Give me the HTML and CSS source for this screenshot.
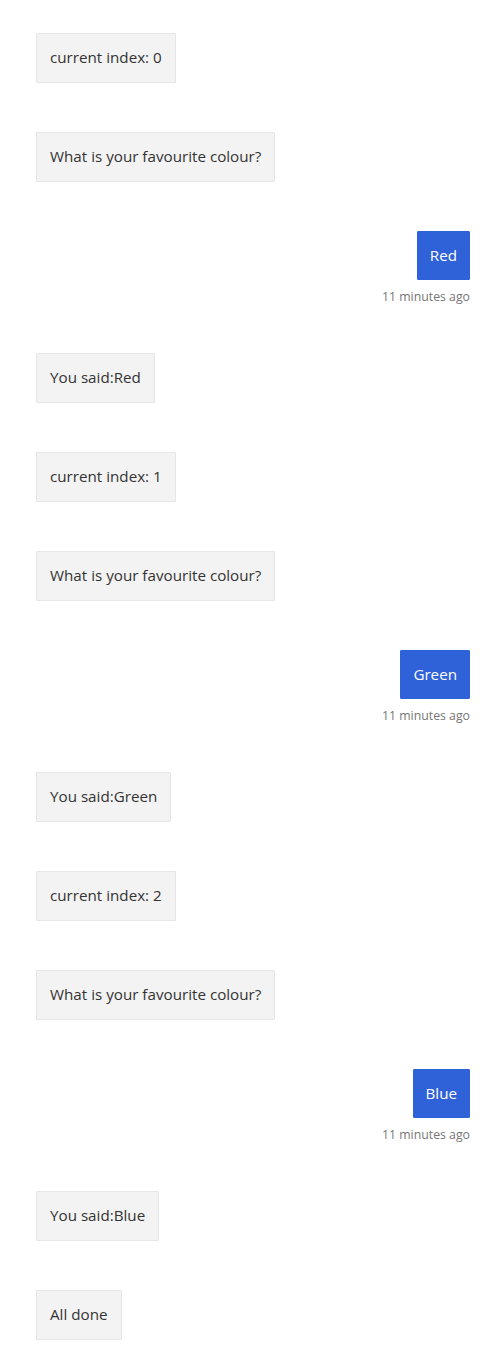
FILE: index.html
```html
<!DOCTYPE html>
<html>
<head>
<meta charset="utf-8">
<link rel="stylesheet" href="styles.css">
</head>
<body>
<ul class="transcript">
  <li class="activity bot"><div class="bubble">current index: 0</div></li>
  <li class="activity bot"><div class="bubble">What is your favourite colour?</div></li>
  <li class="activity user"><div class="bubble">Red</div><div class="time">11 minutes ago</div></li>
  <li class="activity bot"><div class="bubble">You said:Red</div></li>
  <li class="activity bot"><div class="bubble">current index: 1</div></li>
  <li class="activity bot"><div class="bubble">What is your favourite colour?</div></li>
  <li class="activity user"><div class="bubble">Green</div><div class="time">11 minutes ago</div></li>
  <li class="activity bot"><div class="bubble">You said:Green</div></li>
  <li class="activity bot"><div class="bubble">current index: 2</div></li>
  <li class="activity bot"><div class="bubble">What is your favourite colour?</div></li>
  <li class="activity user"><div class="bubble">Blue</div><div class="time">11 minutes ago</div></li>
  <li class="activity bot"><div class="bubble">You said:Blue</div></li>
  <li class="activity bot"><div class="bubble">All done</div></li>
</ul>
</body>
</html>
```
FILE: styles.css
```css
html, body {
  margin: 0;
  padding: 0;
  background: #ffffff;
}
body {
  font-family: "Open Sans", "Noto Sans", "Liberation Sans", sans-serif;
  font-size: 15.2px;
  color: #333333;
}
.transcript {
  list-style: none;
  margin: 0;
  padding: 33px 16px 0 36px;
  display: flex;
  flex-direction: column;
  gap: 49px;
}
.activity {
  display: flex;
  flex-direction: column;
  align-items: flex-start;
}
.activity.user {
  align-items: flex-end;
}
.bubble {
  box-sizing: border-box;
  height: 50px;
  padding: 0 13px 2px;
  display: flex;
  align-items: center;
  line-height: 20px;
  background: #f3f3f3;
  border: 1px solid #e6e6e6;
  border-radius: 1px;
  white-space: nowrap;
}
.user .bubble {
  height: 49px;
  padding: 0 12px 1px;
  background: #2f62d8;
  border-color: #2f62d8;
  color: #ffffff;
}
.time {
  margin-top: 8px;
  padding-top: 1px;
  margin-bottom: -1px;
  font-size: 12.3px;
  line-height: 16px;
  color: #767676;
}
```
